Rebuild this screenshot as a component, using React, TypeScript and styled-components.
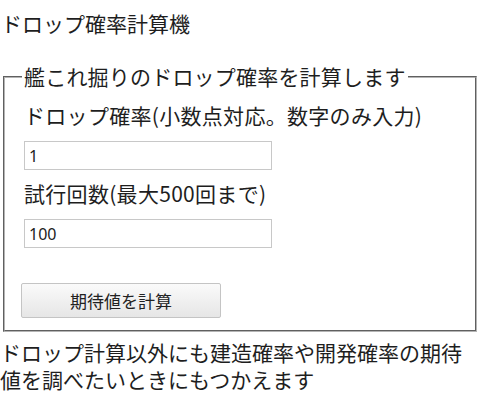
import React from "react";
import styled, { createGlobalStyle } from "styled-components";

const GlobalStyle = createGlobalStyle`
  html, body {
    margin: 0;
    padding: 0;
    background: #ffffff;
  }
  body {
    font-family: "Noto Sans CJK JP", "Noto Sans", sans-serif;
    color: #1e1e1e;
  }
`;

const Page = styled.div`
  width: 480px;
  display: flex;
  flex-direction: column;
`;

const Title = styled.h1`
  margin: 0;
  padding: 10px 0 0 1px;
  height: 63px;
  box-sizing: border-box;
  font-size: 21px;
  font-weight: normal;
  line-height: 27px;
`;

const Group = styled.fieldset`
  margin: 0 3px 0 3px;
  padding: 12px 17px 12px 17px;
  border: 2px groove #b4b4b4;
  display: flex;
  flex-direction: column;
  align-items: flex-start;
`;

const Legend = styled.legend`
  padding: 0 2px;
  font-size: 21px;
  line-height: 27px;
  letter-spacing: 0.2px;
`;

const Label = styled.label`
  margin-left: 2px;
  font-size: 21px;
  line-height: 27px;
  letter-spacing: 0.3px;
`;

const NumberInput = styled.input`
  margin: 12px 0 10px 2px;
  width: 248px;
  height: 29px;
  box-sizing: border-box;
  padding: 0 4px;
  border: 1px solid #c8c8c8;
  border-radius: 0;
  font-family: "Noto Sans", "Noto Sans CJK JP", sans-serif;
  font-size: 16px;
  color: #222;
  outline: none;
`;

const CalcButton = styled.button`
  margin-top: 25px;
  margin-left: -1px;
  width: 200px;
  height: 35px;
  border: 1px solid #c4c4c4;
  border-radius: 2px;
  background: linear-gradient(#fafafa, #e6e6e6);
  font-family: "Noto Sans CJK JP", sans-serif;
  font-size: 17px;
  color: #222;
`;

const Note = styled.p`
  margin: 7px 0 0 0;
  font-size: 21px;
  line-height: 27px;
`;

export default function App() {
  return (
    <>
      <GlobalStyle />
      <Page>
        <Title>ドロップ確率計算機</Title>
        <Group>
          <Legend>艦これ掘りのドロップ確率を計算します</Legend>
          <Label>ドロップ確率(小数点対応。数字のみ入力)</Label>
          <NumberInput defaultValue="1" />
          <Label>試行回数(最大500回まで)</Label>
          <NumberInput defaultValue="100" />
          <CalcButton>期待値を計算</CalcButton>
        </Group>
        <Note>
          ドロップ計算以外にも建造確率や開発確率の期待値を調べたいときにもつかえます
        </Note>
      </Page>
    </>
  );
}
